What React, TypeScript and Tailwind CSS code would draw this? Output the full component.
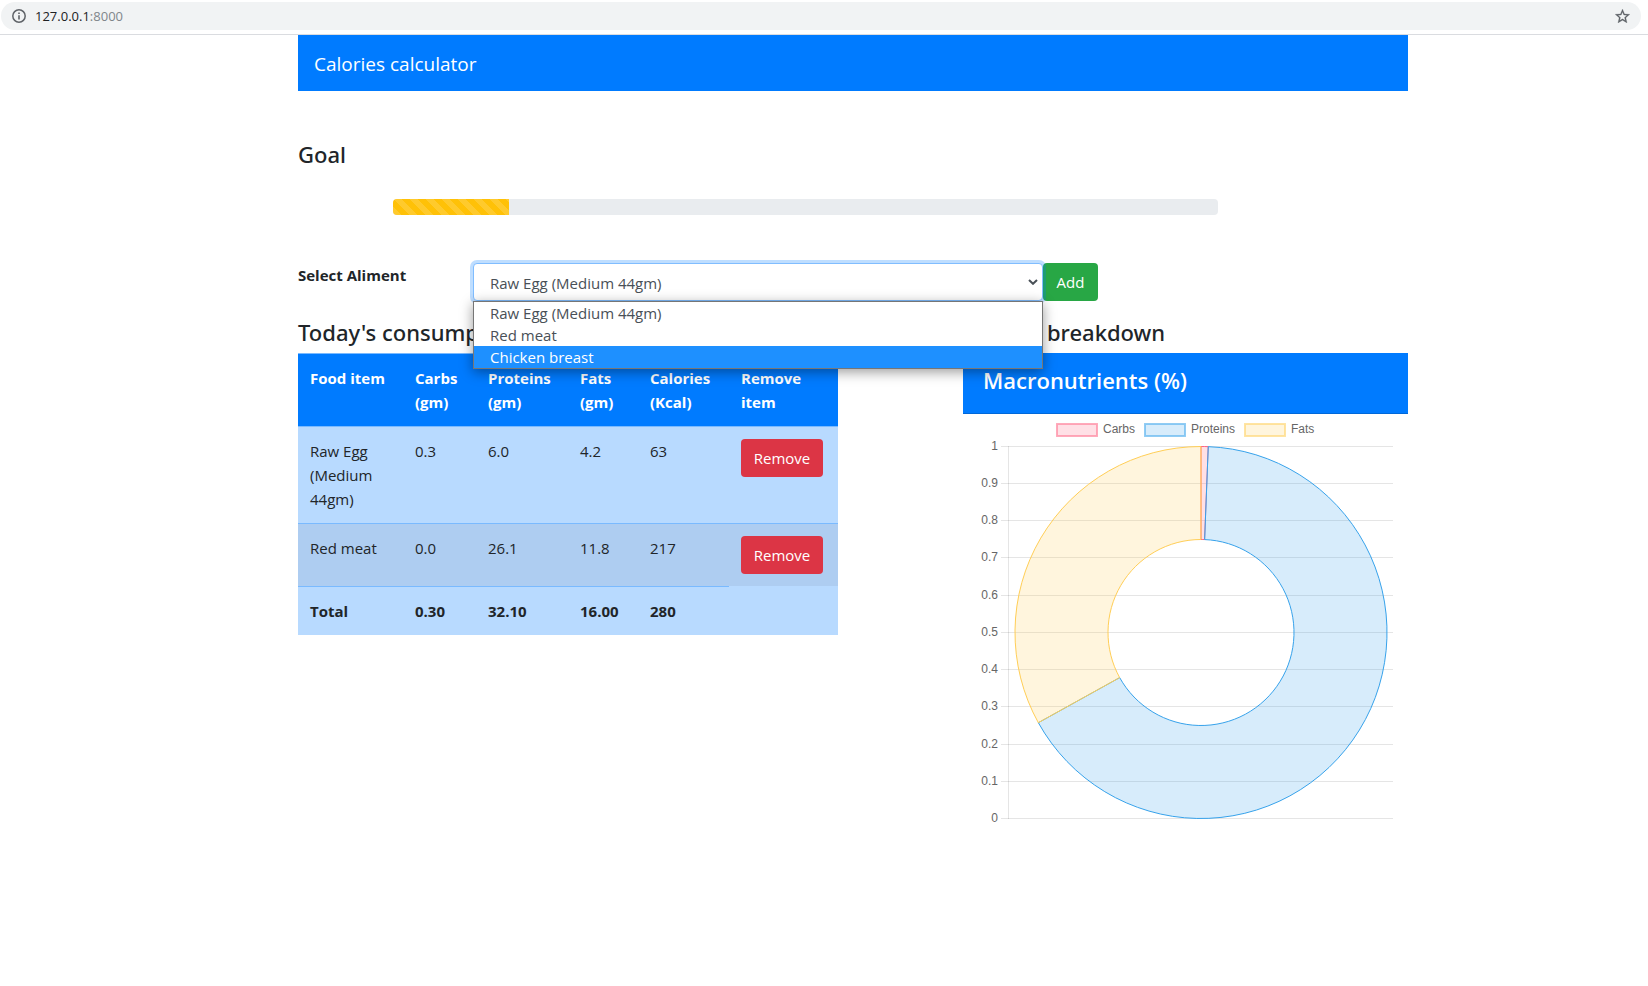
import { useState } from "react";

type Food = { name: string; carbs: string; proteins: string; fats: string; calories: string };

const aliments = ["Raw Egg (Medium 44gm)", "Red meat", "Chicken breast"];

const foods: Food[] = [
  { name: "Raw Egg (Medium 44gm)", carbs: "0.3", proteins: "6.0", fats: "4.2", calories: "63" },
  { name: "Red meat", carbs: "0.0", proteins: "26.1", fats: "11.8", calories: "217" },
];

const columns = [
  { label: "Food item", width: "w-[105px]" },
  { label: "Carbs (gm)", width: "w-[73px]" },
  { label: "Proteins (gm)", width: "w-[92px]" },
  { label: "Fats (gm)", width: "w-[70px]" },
  { label: "Calories (Kcal)", width: "w-[91px]" },
  { label: "Remove item", width: "w-[109px]" },
];

const slices = [
  { label: "Carbs", value: 0.3, fill: "rgba(255,99,132,0.2)", stroke: "rgb(255,99,132)", x: 94 },
  { label: "Proteins", value: 32.1, fill: "rgba(54,162,235,0.2)", stroke: "rgb(54,162,235)", x: 182 },
  { label: "Fats", value: 16, fill: "rgba(255,206,86,0.2)", stroke: "rgb(255,206,86)", x: 282 },
];

const ticks = ["1", "0.9", "0.8", "0.7", "0.6", "0.5", "0.4", "0.3", "0.2", "0.1", "0"];

const CX = 238;
const CY = 218.5;
const OUTER = 186;
const INNER = 93;

function point(radius: number, angle: number) {
  return `${CX + radius * Math.sin(angle)} ${CY - radius * Math.cos(angle)}`;
}

function ringPath(start: number, end: number) {
  const large = end - start > Math.PI ? 1 : 0;
  return `M${point(OUTER, start)} A${OUTER} ${OUTER} 0 ${large} 1 ${point(OUTER, end)} L${point(INNER, end)} A${INNER} ${INNER} 0 ${large} 0 ${point(INNER, start)} Z`;
}

function MacroChart() {
  const total = slices.reduce((sum, s) => sum + s.value, 0);
  let angle = 0;
  const arcs = slices.map((s) => {
    const start = angle;
    angle += (s.value / total) * Math.PI * 2;
    return { ...s, d: ringPath(start, angle) };
  });
  return (
    <svg
      viewBox="0 0 445 412"
      className="block w-full font-['Liberation_Sans',Arial,sans-serif] text-[12px]"
      role="img"
      aria-label="Macronutrients doughnut chart"
    >
      {slices.map((s) => (
        <g key={s.label}>
          <rect x={s.x - 0.5} y={9.5} width={41} height={13} fill={s.fill} />
          <rect x={s.x} y={10} width={40} height={12} fill="none" stroke={s.stroke} strokeOpacity={0.5} strokeWidth={2} shapeRendering="crispEdges" />
          <text x={s.x + 46} y={19} fill="#666">
            {s.label}
          </text>
        </g>
      ))}
      {ticks.map((t, i) => {
        const y = Math.round(31.7 + i * 37.25) + 0.5;
        return (
          <g key={t}>
            <line x1={38} x2={430} y1={y} y2={y} stroke="rgba(0,0,0,0.1)" />
            <text x={35} y={y + 3} textAnchor="end" fill="#666">
              {t}
            </text>
          </g>
        );
      })}
      <line x1={45.5} x2={45.5} y1={32} y2={405} stroke="rgba(0,0,0,0.1)" />
      {arcs.map((a) => (
        <path key={a.label} d={a.d} fill={a.fill} stroke={a.stroke} strokeLinejoin="bevel" />
      ))}
    </svg>
  );
}

function BrowserBar() {
  return (
    <header className="flex h-[35px] items-start border-b border-[#dadce0] bg-white pt-[2px] pr-[7px] pl-px">
      <div className="flex h-7 flex-1 items-center rounded-full bg-[#f1f3f4] pr-[11px] pl-[11px]">
        <button type="button" aria-label="View site information">
          <svg viewBox="0 0 14 14" className="block size-[14px]" fill="none">
            <circle cx="7" cy="7" r="6.2" stroke="#5f6368" strokeWidth="1.5" />
            <path d="M7 6.2v4.3M7 3.4v1.6" stroke="#5f6368" strokeWidth="1.6" />
          </svg>
        </button>
        <span className="ml-[9px] flex-1 font-['Open_Sans',sans-serif] text-[13px] text-[#202124]">
          127.0.0.1<span className="text-[#80868b]">:8000</span>
        </span>
        <button type="button" aria-label="Bookmark this page">
          <svg viewBox="2 2 20 19" className="block h-[14px] w-[15px]" fill="#5f6368" stroke="#5f6368" strokeWidth="0.3">
            <path d="M22 9.24l-7.19-.62L12 2 9.19 8.63 2 9.24l5.46 4.73L5.82 21 12 17.27 18.18 21l-1.63-7.03L22 9.24zM12 15.4l-3.76 2.27 1-4.28-3.32-2.88 4.38-.38L12 6.1l1.71 4.04 4.38.38-3.32 2.88 1 4.28L12 15.4z" />
          </svg>
        </button>
      </div>
    </header>
  );
}

function AlimentPicker() {
  const [selected, setSelected] = useState(aliments[0]);
  return (
    <form className="mt-12 flex items-start" onSubmit={(e) => e.preventDefault()}>
      <label htmlFor="aliment" className="w-[175px] shrink-0 font-bold">
        Select Aliment
      </label>
      <div className="relative z-10 w-[570px]">
        <select
          id="aliment"
          value={selected}
          onChange={(e) => setSelected(e.target.value)}
          className="block h-[38px] w-full appearance-none rounded border border-[#80bdff] bg-white px-4 pt-0.5 text-[#495057] shadow-[0_0_0_3px_rgba(0,123,255,0.25)] outline-none"
        >
          {aliments.map((a) => (
            <option key={a}>{a}</option>
          ))}
        </select>
        <svg viewBox="0 0 10 6" className="pointer-events-none absolute top-4 right-[5px] h-[6px] w-[10px]" fill="none">
          <path d="M1 1l4 3.8L9 1" stroke="#495057" strokeWidth="2" />
        </svg>
        <ul
          role="listbox"
          aria-label="Aliments"
          className="absolute top-[38px] left-0 w-full border border-[#767676] bg-white leading-[22px] text-[#495057] shadow-[0_3px_12px_rgba(0,0,0,0.4)]"
        >
          {aliments.map((a, i) => (
            <li
              key={a}
              role="option"
              aria-selected={i === 2}
              className="px-4 aria-selected:bg-[#1e90ff] aria-selected:text-white"
            >
              {a}
            </li>
          ))}
        </ul>
      </div>
      <button type="submit" className="h-[38px] w-[55px] rounded bg-[#28a745] text-white">
        Add
      </button>
    </form>
  );
}

function ConsumptionTable() {
  const cell = "border-t border-[#7abaff] p-3";
  return (
    <table className="w-full table-fixed border-separate border-spacing-0 bg-[#b8daff] text-left align-top">
      <thead className="bg-[#007bff] text-white">
        <tr>
          {columns.map((c) => (
            <th key={c.label} scope="col" className={`${c.width} border-t border-[#7abaff] p-3 align-top font-bold`}>
              {c.label}
            </th>
          ))}
        </tr>
      </thead>
      <tbody className="align-top">
        {foods.map((f) => (
          <tr key={f.name} className="even:bg-[#aecdf1]">
            <td className={cell}>{f.name}</td>
            <td className={cell}>{f.carbs}</td>
            <td className={cell}>{f.proteins}</td>
            <td className={cell}>{f.fats}</td>
            <td className={cell}>{f.calories}</td>
            <td className={cell}>
              <button type="button" className="block h-[38px] w-[82px] rounded bg-[#dc3545] text-white">
                Remove
              </button>
            </td>
          </tr>
        ))}
        <tr className="font-bold">
          <td className={cell}>Total</td>
          <td className={cell}>0.30</td>
          <td className={cell}>32.10</td>
          <td className={cell}>16.00</td>
          <td className={cell}>280</td>
        </tr>
      </tbody>
    </table>
  );
}

export default function App() {
  return (
    <div className="min-h-screen bg-white font-['Open_Sans','Noto_Sans',sans-serif] text-[15px] leading-6 text-[#212529]">
      <BrowserBar />
      <div className="pl-[58px]">
        <main className="mx-auto max-w-[1110px]">
          <nav className="flex h-14 items-center bg-[#007bff] px-4 pt-0.5">
            <a href="#" className="text-[19px] text-white">
              Calories calculator
            </a>
          </nav>

          <h2 className="mt-12 font-['Noto_Sans',sans-serif] text-[22px] leading-[30px] font-medium">Goal</h2>
          <div
            role="progressbar"
            aria-label="Calorie goal"
            aria-valuenow={14}
            aria-valuemin={0}
            aria-valuemax={100}
            className="mt-[30px] mr-[190px] ml-[95px] h-4 overflow-hidden rounded bg-[#e9ecef]"
          >
            <div className="h-full w-[14%] bg-[#ffc107] bg-[linear-gradient(45deg,rgba(255,255,255,0.15)_25%,transparent_25%,transparent_50%,rgba(255,255,255,0.15)_50%,rgba(255,255,255,0.15)_75%,transparent_75%,transparent)] bg-[size:16px_16px]" />
          </div>

          <AlimentPicker />

          <div className="mt-4 flex items-start justify-between">
            <section className="w-[540px]">
              <h2 className="mb-1.5 font-['Noto_Sans',sans-serif] text-[22px] leading-[30px] font-medium">Today's consumption</h2>
              <ConsumptionTable />
            </section>
            <section className="w-[445px]">
              <h2 className="mb-1.5 font-['Noto_Sans',sans-serif] text-[22px] leading-[30px] font-medium">Today's breakdown</h2>
              <div className="h-[61px] border-b border-black/15 bg-[#007bff] px-5 pt-3">
                <h3 className="text-[22px] leading-[30px] font-semibold text-white">Macronutrients (%)</h3>
              </div>
              <MacroChart />
            </section>
          </div>
        </main>
      </div>
    </div>
  );
}
